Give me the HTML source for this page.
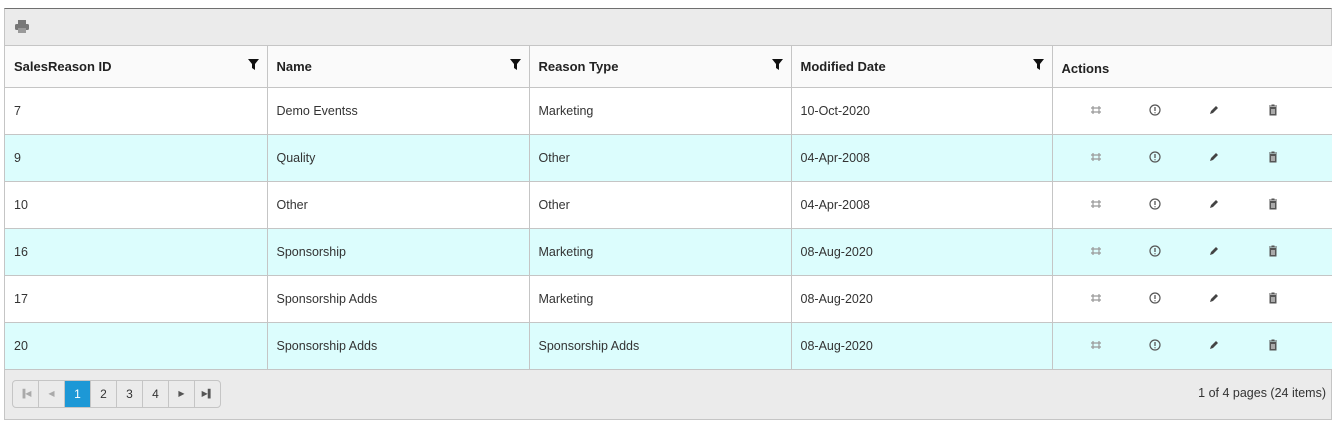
<!DOCTYPE html>
<html><head><style>
body{margin:0;background:#fff;font-family:"Liberation Sans",sans-serif;}
.g{position:absolute;left:4px;top:8px;width:1328px;height:412px;border:1px solid #c5c5c5;border-top:1px solid #6f6f6f;background:#ebebeb;box-sizing:border-box;}
.tb{height:36px;border-bottom:1px solid #c5c5c5;position:relative}
table{border-collapse:collapse;width:1327px;table-layout:fixed;background:#fff}
th{height:37px;background:#fafafa;text-align:left;font-size:13px;font-weight:bold;color:#222;padding:0 0 0 9px;border-right:1px solid #c5c5c5;border-bottom:1px solid #c5c5c5;position:relative}
td{height:46px;font-size:12.5px;color:#333;padding:0 0 0 9px;border-right:1px solid #c5c5c5;border-bottom:1px solid #c5c5c5}
tr.a td{background:#dcfdfd}
th:last-child,td:last-child{border-right:none}
.f{position:absolute;right:8px;top:13px}
.ac{display:flex;padding-left:28px}
.ac span{width:59px;display:inline-block}
.pg{position:absolute;left:7px;top:10px;display:flex;border:1px solid #c5c5c5;border-radius:4px;height:26px;overflow:hidden}
.pg div{width:25px;border-right:1px solid #c5c5c5;text-align:center;line-height:26px;font-size:12px;color:#333}
.pg div:last-child{border-right:none}
.pg .s{background:#1d98d6;color:#fff}
.pg .d{color:#aaa;font-size:8px}
</style></head><body>
<div class="g">
<div class="tb"><svg style="position:absolute;left:10px;top:11px" width="14" height="13" viewBox="0 0 14 13"><rect x="3" y="0" width="8" height="4" fill="#777"/><rect x="0" y="4" width="14" height="6" rx="1.5" fill="#777"/><rect x="3" y="8" width="8" height="5" fill="#999"/></svg></div>
<table>
<colgroup><col style="width:262px"><col style="width:262px"><col style="width:262px"><col style="width:261px"><col></colgroup>
<tr><th>SalesReason ID<svg class="f" width="11" height="11" viewBox="0 0 11 11"><path d="M0 0H11L7 5V11L4 9V5Z" fill="#111"/></svg></th><th>Name<svg class="f" width="11" height="11" viewBox="0 0 11 11"><path d="M0 0H11L7 5V11L4 9V5Z" fill="#111"/></svg></th><th>Reason Type<svg class="f" width="11" height="11" viewBox="0 0 11 11"><path d="M0 0H11L7 5V11L4 9V5Z" fill="#111"/></svg></th><th>Modified Date<svg class="f" width="11" height="11" viewBox="0 0 11 11"><path d="M0 0H11L7 5V11L4 9V5Z" fill="#111"/></svg></th><th style="padding-top:4px">Actions</th></tr>
<tr><td>7</td><td>Demo Eventss</td><td>Marketing</td><td>10-Oct-2020</td><td class="x"></td></tr>
<tr class="a"><td>9</td><td>Quality</td><td>Other</td><td>04-Apr-2008</td><td class="x"></td></tr>
<tr><td>10</td><td>Other</td><td>Other</td><td>04-Apr-2008</td><td class="x"></td></tr>
<tr class="a"><td>16</td><td>Sponsorship</td><td>Marketing</td><td>08-Aug-2020</td><td class="x"></td></tr>
<tr><td>17</td><td>Sponsorship Adds</td><td>Marketing</td><td>08-Aug-2020</td><td class="x"></td></tr>
<tr class="a"><td>20</td><td>Sponsorship Adds</td><td>Sponsorship Adds</td><td>08-Aug-2020</td><td class="x"></td></tr>
</table>
<div style="position:relative">
<div class="pg"><div class="d">▐◀</div><div class="d">◀</div><div class="s">1</div><div>2</div><div>3</div><div>4</div><div style="font-size:8px;color:#555">▶</div><div style="font-size:8px;color:#555">▶▌</div></div>
<div style="position:absolute;right:5px;top:16px;font-size:12.5px;color:#333">1 of 4 pages (24 items)</div>
</div>
</div>
<script>
var ic='<div class="ac"><span><svg width="12" height="12" viewBox="0 0 12 12"><path d="M1 4H11M1 8H11M3 2V10M9 2V10" stroke="#999" fill="none" stroke-width="1.2"/></svg></span><span><svg width="12" height="12" viewBox="0 0 12 12"><circle cx="6" cy="6" r="5" stroke="#555" fill="none" stroke-width="1.2"/><path d="M6 3V7M6 8.3V9.3" stroke="#555" stroke-width="1.3"/></svg></span><span><svg width="12" height="12" viewBox="0 0 12 12"><path d="M2 10L3 7L8 2L10 4L5 9Z" fill="#444"/></svg></span><span><svg width="12" height="12" viewBox="0 0 12 12"><path d="M2 2H10M4.5 1H7.5M3 3.5H9V11H3Z" fill="#555" stroke="#555"/><path d="M5 5V10M7 5V10" stroke="#fff"/></svg></span></div>';
document.querySelectorAll('.x').forEach(function(e){e.innerHTML=ic});
</script>
</body></html>
